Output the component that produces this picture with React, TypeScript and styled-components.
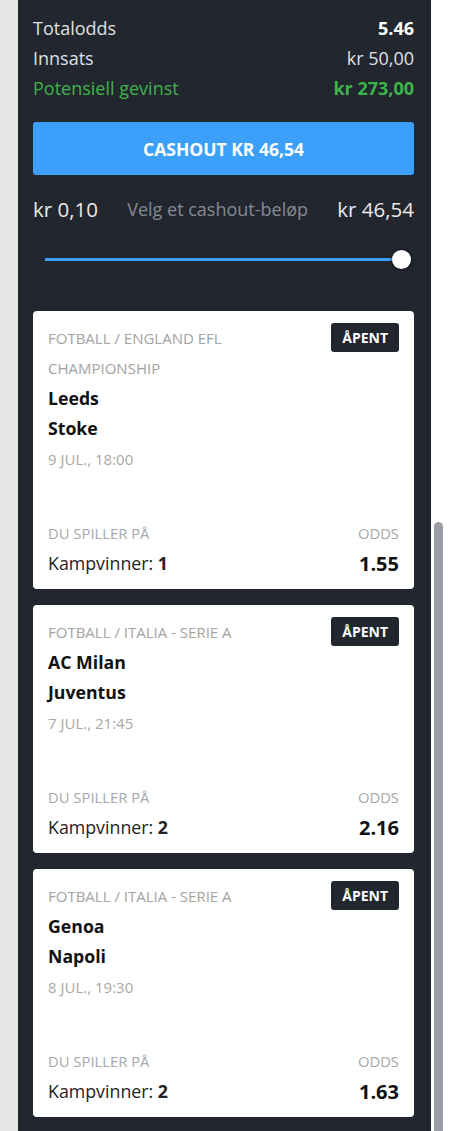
import React from "react";
import styled, { createGlobalStyle } from "styled-components";

const Global = createGlobalStyle`
  html, body { margin: 0; padding: 0; background: #ffffff; }
  body { font-family: "Open Sans", "Noto Sans", sans-serif; }
  * { box-sizing: border-box; }
`;

const Page = styled.div`
  display: flex;
  width: 449px;
  height: 1131px;
  overflow: hidden;
`;

const Gutter = styled.div`
  width: 18px;
  flex: none;
  background: #e6e6e6;
`;

const Panel = styled.div`
  width: 413px;
  flex: none;
  background: #22262e;
  padding: 13px 17px 0 15px;
  display: flex;
  flex-direction: column;
`;

const ScrollTrack = styled.div`
  width: 18px;
  flex: none;
  background: #ffffff;
  display: flex;
  flex-direction: column;
  padding: 0 6px 0 3px;
`;

const ScrollThumb = styled.div`
  margin-top: 522px;
  flex: 1;
  background: #9b9ea6;
  border-radius: 5px 5px 0 0;
`;

const SummaryRow = styled.div<{ $tone?: "green" }>`
  display: flex;
  justify-content: space-between;
  align-items: center;
  height: 30px;
  font-size: 18px;
  color: ${(p) => (p.$tone === "green" ? "#3fb34a" : "#dfe0e2")};
`;

const SummaryValue = styled.span<{ $bold?: boolean; $white?: boolean }>`
  font-weight: ${(p) => (p.$bold ? 700 : 400)};
  color: ${(p) => (p.$white ? "#ffffff" : "inherit")};
`;

const CashoutButton = styled.button`
  margin-top: 19px;
  height: 53px;
  width: 100%;
  border: none;
  border-radius: 3px;
  background: #3c9ff9;
  color: #ffffff;
  font-family: "Open Sans", "Noto Sans", sans-serif;
  font-weight: 700;
  font-size: 17.5px;
`;

const RangeLabels = styled.div`
  display: flex;
  justify-content: space-between;
  align-items: center;
  margin-top: 19px;
  height: 30px;
`;

const RangeValue = styled.span`
  font-size: 20.5px;
  color: #e8e9eb;
`;

const RangeHint = styled.span`
  font-size: 18px;
  color: #858a92;
`;

const SliderWrap = styled.div`
  position: relative;
  height: 20px;
  margin: 25px 3px 0 12px;
  display: flex;
  align-items: center;
`;

const SliderTrack = styled.div`
  flex: 1;
  height: 3px;
  margin-right: 9px;
  background: #3c9ff9;
`;

const SliderThumb = styled.div`
  position: absolute;
  right: 0;
  top: 50%;
  width: 19px;
  height: 19px;
  margin-top: -9.5px;
  border-radius: 50%;
  background: #ffffff;
  box-shadow: 0 0 3px 1px rgba(0, 0, 0, 0.45);
`;

const CardList = styled.div`
  margin-top: 42px;
  display: flex;
  flex-direction: column;
  gap: 16px;
`;

const Card = styled.div`
  background: #ffffff;
  border-radius: 4px;
  padding: 12px 15px 11px 15px;
  display: flex;
  flex-direction: column;
`;

const CardHeader = styled.div`
  display: flex;
  justify-content: space-between;
  align-items: flex-start;
  gap: 16px;
`;

const Category = styled.div`
  font-size: 15px;
  line-height: 30px;
  color: #a3a3a3;
  text-transform: uppercase;
  max-width: 250px;
`;

const Badge = styled.span`
  flex: none;
  background: #22262e;
  color: #ffffff;
  font-weight: 700;
  font-size: 14px;
  height: 29px;
  line-height: 29px;
  padding: 0 11px;
  border-radius: 3px;
`;

const Team = styled.div`
  font-size: 17.7px;
  line-height: 30px;
  font-weight: 700;
  color: #111111;
`;

const DateLine = styled.div`
  margin-top: 1px;
  font-size: 15px;
  line-height: 30px;
  color: #a8a8a8;
`;

const BetRow = styled.div<{ $first?: boolean }>`
  display: flex;
  justify-content: space-between;
  align-items: center;
  height: 30px;
  margin-top: ${(p) => (p.$first ? "44px" : "0")};
`;

const BetLabel = styled.span`
  font-size: 14.8px;
  color: #a8a8a8;
`;

const Market = styled.span`
  font-size: 17.8px;
  color: #222222;
  b { font-weight: 700; }
`;

const Odds = styled.span`
  font-size: 20px;
  font-weight: 700;
  color: #111111;
`;

type Bet = {
  category: string;
  home: string;
  away: string;
  date: string;
  pick: string;
  odds: string;
};

const bets: Bet[] = [
  { category: "Fotball / England EFL Championship", home: "Leeds", away: "Stoke", date: "9 JUL., 18:00", pick: "1", odds: "1.55" },
  { category: "Fotball / Italia - Serie A", home: "AC Milan", away: "Juventus", date: "7 JUL., 21:45", pick: "2", odds: "2.16" },
  { category: "Fotball / Italia - Serie A", home: "Genoa", away: "Napoli", date: "8 JUL., 19:30", pick: "2", odds: "1.63" },
];

function BetCard({ bet }: { bet: Bet }) {
  return (
    <Card>
      <CardHeader>
        <Category>{bet.category}</Category>
        <Badge>ÅPENT</Badge>
      </CardHeader>
      <Team>{bet.home}</Team>
      <Team>{bet.away}</Team>
      <DateLine>{bet.date}</DateLine>
      <BetRow $first>
        <BetLabel>DU SPILLER PÅ</BetLabel>
        <BetLabel>ODDS</BetLabel>
      </BetRow>
      <BetRow>
        <Market>
          Kampvinner: <b>{bet.pick}</b>
        </Market>
        <Odds>{bet.odds}</Odds>
      </BetRow>
    </Card>
  );
}

export default function App() {
  return (
    <>
      <Global />
      <Page>
        <Gutter />
        <Panel>
          <SummaryRow>
            <span>Totalodds</span>
            <SummaryValue $bold $white>5.46</SummaryValue>
          </SummaryRow>
          <SummaryRow>
            <span>Innsats</span>
            <SummaryValue>kr 50,00</SummaryValue>
          </SummaryRow>
          <SummaryRow $tone="green">
            <span>Potensiell gevinst</span>
            <SummaryValue $bold>kr 273,00</SummaryValue>
          </SummaryRow>
          <CashoutButton>CASHOUT KR 46,54</CashoutButton>
          <RangeLabels>
            <RangeValue>kr 0,10</RangeValue>
            <RangeHint>Velg et cashout-beløp</RangeHint>
            <RangeValue>kr 46,54</RangeValue>
          </RangeLabels>
          <SliderWrap>
            <SliderTrack />
            <SliderThumb />
          </SliderWrap>
          <CardList>
            {bets.map((b) => (
              <BetCard key={b.home} bet={b} />
            ))}
          </CardList>
        </Panel>
        <ScrollTrack>
          <ScrollThumb />
        </ScrollTrack>
      </Page>
    </>
  );
}
